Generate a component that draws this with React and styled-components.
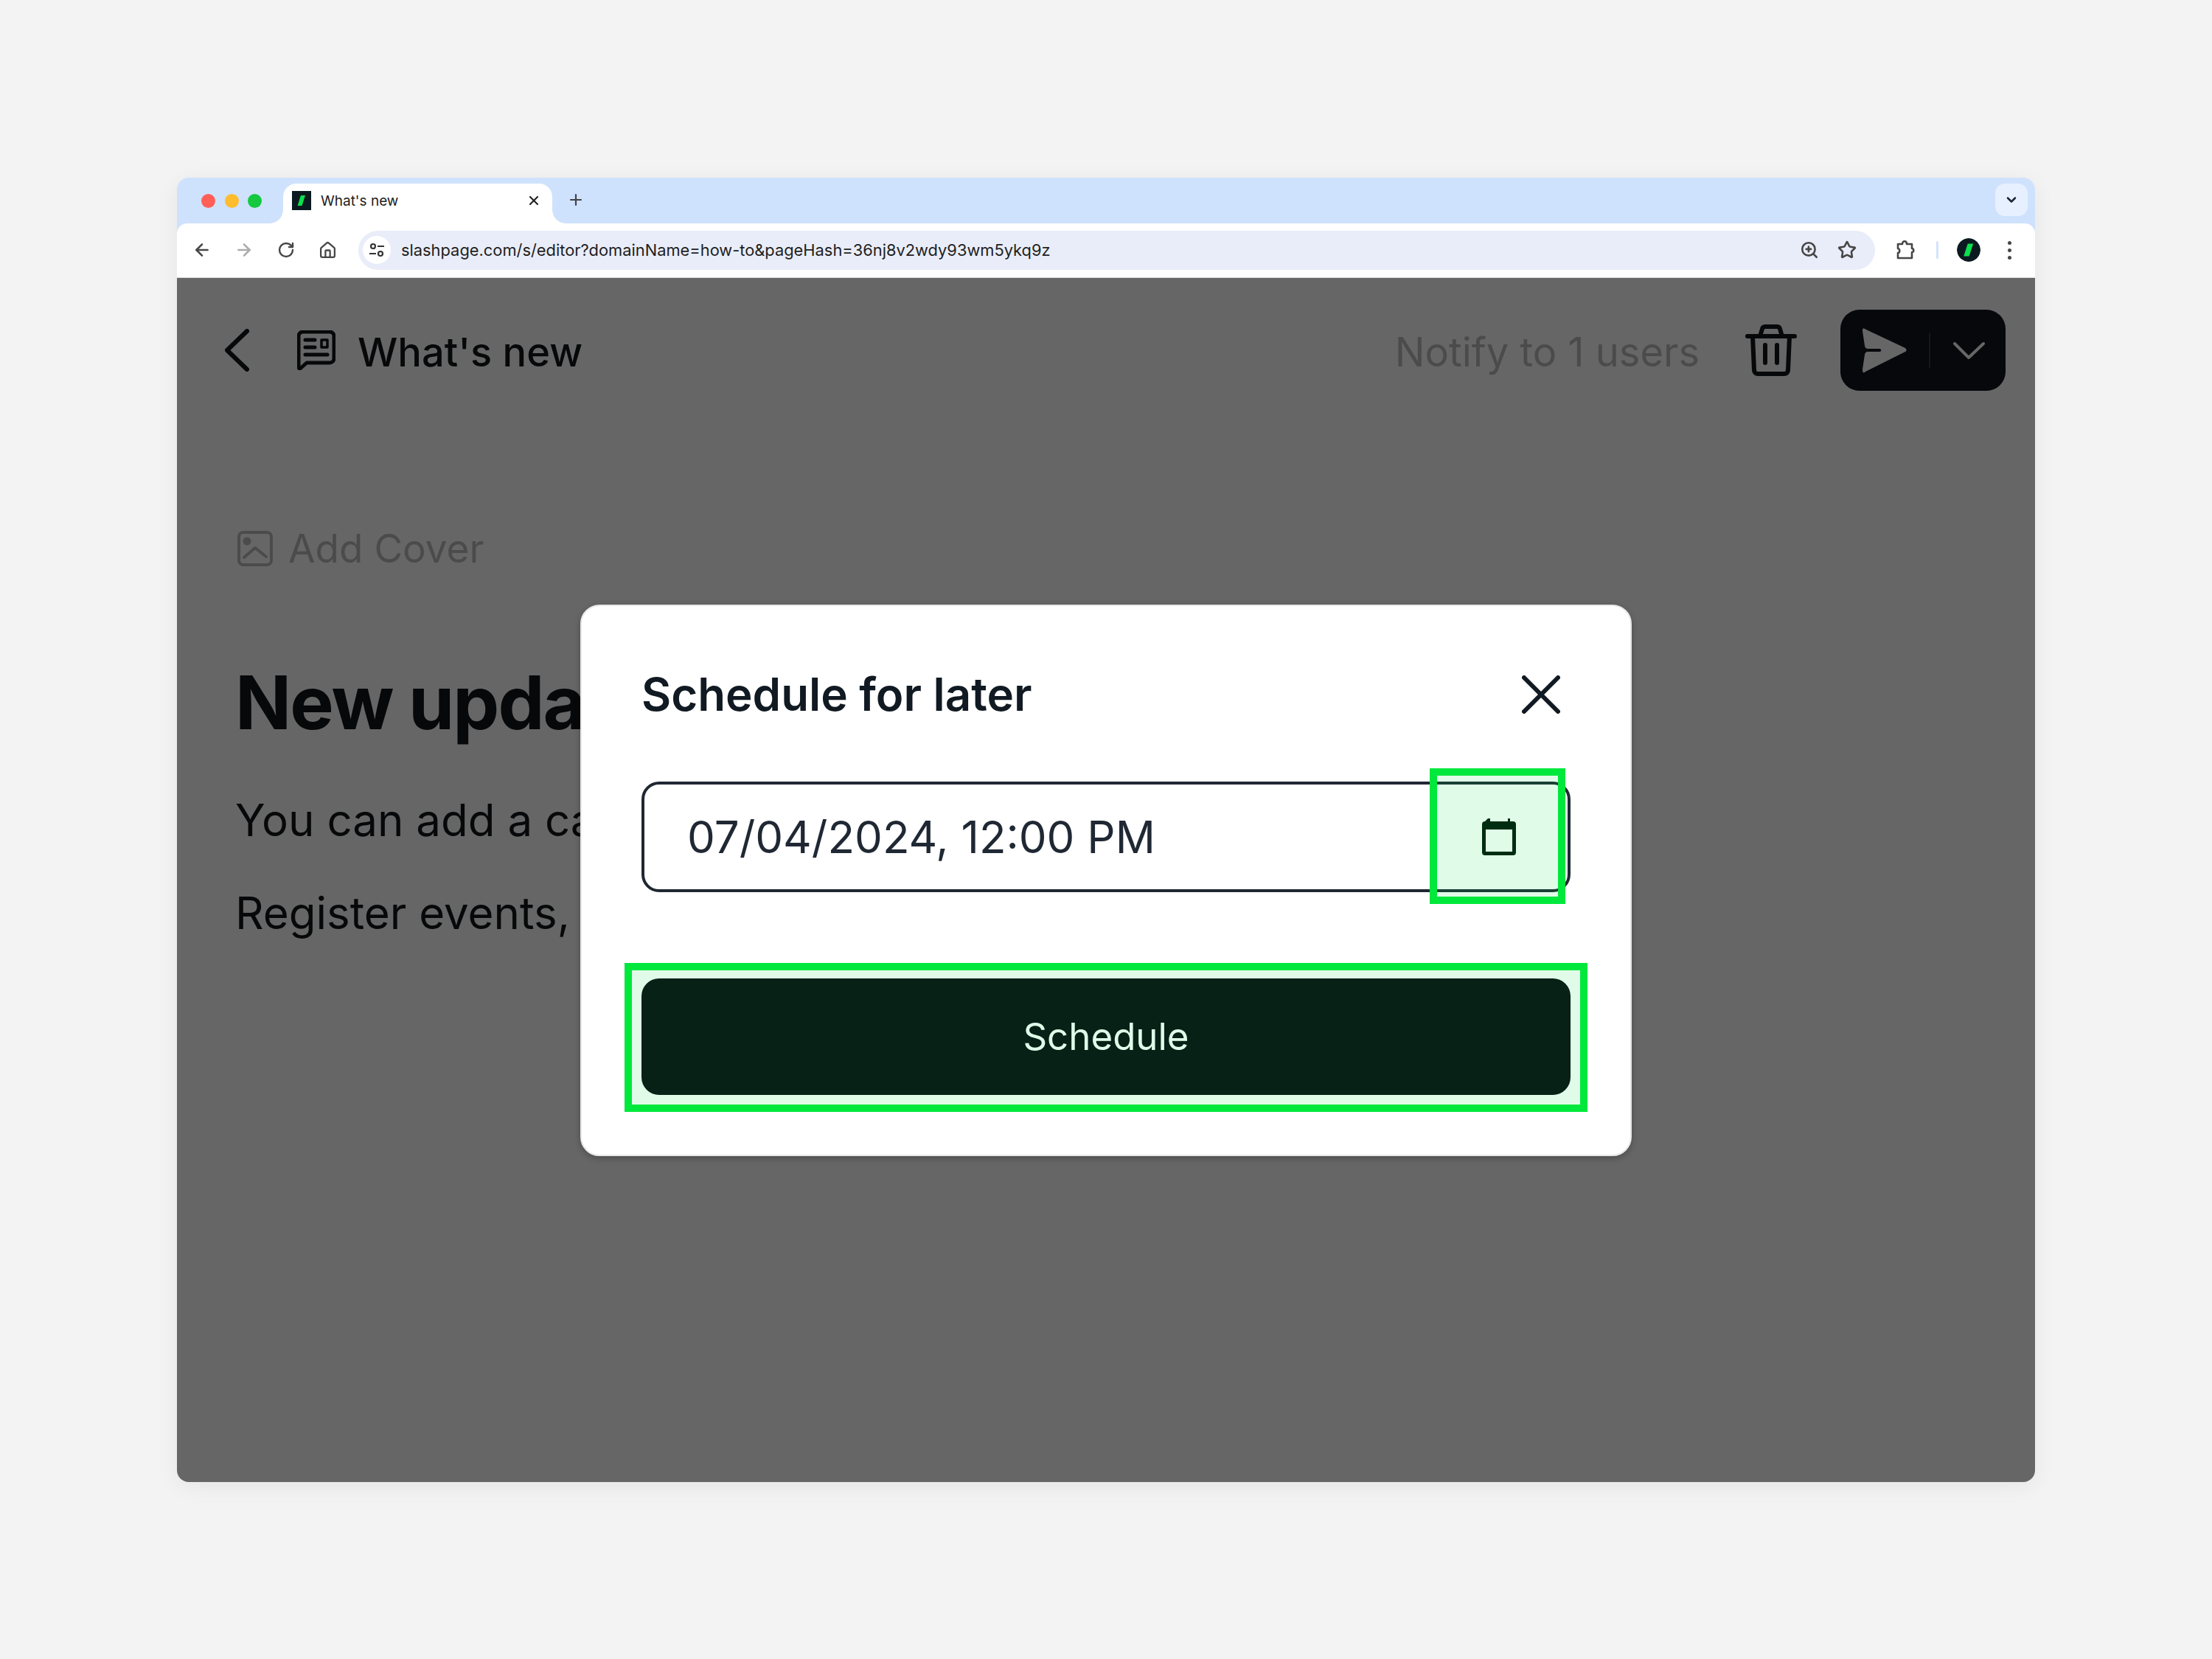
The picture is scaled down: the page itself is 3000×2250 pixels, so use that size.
import React from "react"
import styled, { createGlobalStyle } from "styled-components"
import { ArrowLeft, ArrowRight, RotateCw, House, ZoomIn, Star, ChevronDown, Plus, X } from "lucide-react"

const GlobalStyle = createGlobalStyle`
  html, body { margin: 0; padding: 0; background: #f3f3f3; }
  * { box-sizing: border-box; }
  body { font-family: Inter, "Noto Sans", sans-serif; }
`

const Stage = styled.div`
  width: 3000px;
  height: 2250px;
  padding: 241px 240px 0;
  background: #f3f3f3;
`

const BrowserWindow = styled.div`
  height: 1769px;
  display: flex;
  flex-direction: column;
  border-radius: 16px;
  overflow: hidden;
  background: #cfe2fd;
  box-shadow: 0 6px 30px rgba(0, 0, 0, 0.06);
`

const TabStrip = styled.div`
  height: 62px;
  flex: none;
  display: flex;
  align-items: flex-end;
  padding: 0 10px 0 33px;
`

const Lights = styled.div`
  display: flex;
  gap: 12.5px;
  margin: 0 29px 21px 0;
`

const Light = styled.span`
  width: 19px;
  height: 19px;
  border-radius: 50%;
  background: ${(p) => p.$color};
`

const Tab = styled.div`
  position: relative;
  width: 365px;
  height: 54px;
  display: flex;
  align-items: center;
  padding: 0 15px 8px 12px;
  background: #fff;
  border-radius: 18px 18px 0 0;
  &::before,
  &::after {
    content: "";
    position: absolute;
    bottom: 0;
    width: 18px;
    height: 18px;
  }
  &::before {
    left: -18px;
    background: radial-gradient(circle at 0 0, #cfe2fd 17.5px, #fff 18px);
  }
  &::after {
    right: -18px;
    background: radial-gradient(circle at 100% 0, #cfe2fd 17.5px, #fff 18px);
  }
`

const TabTitle = styled.span`
  margin-left: 13px;
  font-size: 19px;
  color: #222;
  flex: 1;
`

const NewTab = styled.div`
  width: 36px;
  height: 36px;
  margin: 0 0 14px 14px;
  display: flex;
  align-items: center;
  justify-content: center;
  color: #444;
`

const TabSearch = styled.div`
  width: 44px;
  height: 44px;
  margin: 0 0 10px auto;
  display: flex;
  align-items: center;
  justify-content: center;
  border-radius: 13px;
  background: #e7f0fe;
  color: #1c2530;
`

const Toolbar = styled.div`
  height: 74px;
  flex: none;
  display: flex;
  align-items: center;
  padding: 0 0 1px 5px;
  background: #fff;
  border-radius: 14px 14px 0 0;
  border-bottom: 1px solid #dcdcdc;
`

const NavButton = styled.div`
  width: 57px;
  height: 40px;
  display: flex;
  align-items: center;
  justify-content: center;
  color: ${(p) => (p.$disabled ? "#ababab" : "#474747")};
`

const Omnibox = styled.div`
  width: 2057px;
  height: 53px;
  margin-left: 13px;
  display: flex;
  align-items: center;
  padding: 0 20px 0 6px;
  border-radius: 27px;
  background: #e9edf9;
`

const SiteInfo = styled.div`
  width: 38px;
  height: 38px;
  flex: none;
  display: flex;
  align-items: center;
  justify-content: center;
  border-radius: 50%;
  background: #fff;
`

const Url = styled.span`
  margin-left: 14px;
  flex: 1;
  font-size: 21.85px;
  color: #1f1f1f;
  white-space: nowrap;
`

const OmniIcon = styled.div`
  width: 36px;
  height: 36px;
  display: flex;
  align-items: center;
  justify-content: center;
  color: #474747;
  margin-left: ${(p) => p.$gap || 0}px;
`

const ToolDivider = styled.div`
  width: 3px;
  height: 24px;
  margin-left: 23px;
  border-radius: 2px;
  background: #d3e3fd;
`

const Avatar = styled.div`
  width: 32px;
  height: 32px;
  margin-left: 25px;
  border-radius: 50%;
  overflow: hidden;
`

const Dots = styled.div`
  margin-left: 37px;
  display: flex;
  flex-direction: column;
  gap: 5px;
  & > span {
    width: 5px;
    height: 5px;
    border-radius: 50%;
    background: #474747;
  }
`

const Content = styled.div`
  position: relative;
  flex: 1;
  background: #fff;
  overflow: hidden;
`

const EditorBar = styled.div`
  height: 110px;
  margin-top: 43px;
  display: flex;
  align-items: center;
  padding: 0 40px 0 65px;
`

const BackIcon = styled.svg`
  width: 33px;
  height: 58px;
  margin-right: 65px;
`

const DocIcon = styled.svg`
  width: 52px;
  height: 54px;
  margin-right: 30px;
`

const DocTitle = styled.h1`
  margin: 4px 0 0;
  flex: 1;
  font-size: 54.2px;
  line-height: 70px;
  font-weight: 500;
  color: #111418;
`

const NotifyLabel = styled.span`
  margin-top: 4px;
  font-size: 54.2px;
  font-weight: 400;
  color: #bcbcbc;
`

const TrashIcon = styled.svg`
  width: 70px;
  height: 70px;
  margin-left: 62px;
`

const SendButton = styled.div`
  width: 224px;
  height: 110px;
  margin-left: 59px;
  display: flex;
  align-items: center;
  padding-left: 30px;
  border-radius: 26px;
  background: #12141c;
`

const SendDivider = styled.span`
  width: 2px;
  height: 47px;
  margin: 0 31px 0 30px;
  background: #3a3a3a;
`

const Editor = styled.div`
  padding: 188px 82px 0;
`

const AddCover = styled.div`
  display: flex;
  align-items: center;
  gap: 21px;
  height: 52px;
  font-size: 53px;
  color: #bcbcbc;
`

const Headline = styled.h2`
  margin: 123px 0 0 -3px;
  font-size: 100px;
  line-height: 120px;
  font-weight: 700;
  letter-spacing: -2px;
  color: #111418;
`

const Paragraph = styled.p`
  margin: ${(p) => p.$top}px 0 0 -3px;
  font-size: 60px;
  line-height: 80px;
  color: #111418;
`

const Dimmer = styled.div`
  position: absolute;
  inset: 0;
  display: flex;
  align-items: center;
  justify-content: center;
  background: rgba(0, 0, 0, 0.6);
`

const Modal = styled.div`
  width: 1426px;
  padding: 79px 81px 81px;
  background: #fff;
  border-radius: 26px;
  border: 2px solid #e8e8e8;
  box-shadow: 0 3px 8px rgba(0, 0, 0, 0.25);
`

const ModalHeader = styled.div`
  height: 82px;
  display: flex;
  align-items: center;
  justify-content: space-between;
`

const ModalTitle = styled.h3`
  margin: 0;
  font-size: 61.8px;
  font-weight: 600;
  color: #111a22;
`

const CloseIcon = styled.div`
  width: 56px;
  height: 56px;
  margin-right: 12px;
  display: flex;
  align-items: center;
  justify-content: center;
  color: #111a22;
`

const DateField = styled.div`
  position: relative;
  height: 150px;
  margin-top: 77px;
  display: flex;
  align-items: center;
  justify-content: space-between;
  padding: 0 70px 0 58px;
  border: 4px solid #1f2833;
  border-radius: 24px;
`

const DateValue = styled.span`
  font-size: 60px;
  color: #1f2833;
`

const CalendarIcon = styled.svg`
  width: 46px;
  height: 50px;
`

const SubmitButton = styled.div`
  position: relative;
  height: 158px;
  margin-top: 117px;
  display: flex;
  align-items: center;
  justify-content: center;
  border-radius: 24px;
  background: #090610;
  color: #fff;
  font-size: 51px;
  font-weight: 400;
`

const Highlight = styled.div`
  position: absolute;
  border: 10px solid #00e83c;
  background: rgba(0, 230, 70, 0.12);
  pointer-events: none;
`

const CalendarHighlight = styled(Highlight)`
  top: -22px;
  right: 3px;
  width: 184px;
  height: 184px;
`

const ButtonHighlight = styled(Highlight)`
  inset: -21px -23px -23px -23px;
`

function SlashMark({ size, round }) {
  return (
    <svg width={size} height={size} viewBox="0 0 26 26">
      {round ? <circle cx="13" cy="13" r="13" fill="#0b1a20" /> : <rect width="26" height="26" fill="#0b1a20" />}
      <path d="M12 6h6l-4.5 14h-6z" fill="#0be04f" />
    </svg>
  )
}

export default function App() {
  return (
    <Stage>
      <GlobalStyle />
      <BrowserWindow>
        <TabStrip>
          <Lights>
            <Light $color="#ff5f57" />
            <Light $color="#febc2e" />
            <Light $color="#14c93f" />
          </Lights>
          <Tab>
            <SlashMark size={26} />
            <TabTitle>What's new</TabTitle>
            <X size={20} strokeWidth={2.6} color="#222" />
          </Tab>
          <NewTab>
            <Plus size={24} strokeWidth={2.2} />
          </NewTab>
          <TabSearch>
            <ChevronDown size={20} strokeWidth={3} />
          </TabSearch>
        </TabStrip>
        <Toolbar>
          <NavButton><ArrowLeft size={26} strokeWidth={2.4} /></NavButton>
          <NavButton $disabled><ArrowRight size={26} strokeWidth={2.4} /></NavButton>
          <NavButton><RotateCw size={24} strokeWidth={2.4} /></NavButton>
          <NavButton><House size={25} strokeWidth={2.2} /></NavButton>
          <Omnibox>
            <SiteInfo>
              <svg width="24" height="24" viewBox="0 0 24 24" fill="none" stroke="#333" strokeWidth="2.2">
                <circle cx="7" cy="7" r="3" />
                <path d="M13 7h9M2 17h9" />
                <circle cx="17" cy="17" r="3" />
              </svg>
            </SiteInfo>
            <Url>slashpage.com/s/editor?domainName=how-to&pageHash=36nj8v2wdy93wm5ykq9z</Url>
            <OmniIcon><ZoomIn size={26} strokeWidth={2.4} /></OmniIcon>
            <OmniIcon $gap={15}><Star size={26} strokeWidth={2.4} /></OmniIcon>
          </Omnibox>
          <OmniIcon $gap={24}>
            <svg width="28" height="28" viewBox="0 0 28 28" fill="none" stroke="#474747" strokeWidth="2.6" strokeLinejoin="round">
              <path d="M3 6h6c0-5 6-5 6 0h7v6c3 0 3 5 0 5v8H3v-7c3 0 3-6 0-6z" />
            </svg>
          </OmniIcon>
          <ToolDivider />
          <Avatar><SlashMark size={32} round /></Avatar>
          <Dots><span /><span /><span /></Dots>
        </Toolbar>
        <Content>
          <EditorBar>
            <BackIcon viewBox="0 0 33 58" fill="none" stroke="#111418" strokeWidth="6" strokeLinecap="round" strokeLinejoin="round">
              <path d="M30 3L3 29l27 26" />
            </BackIcon>
            <DocIcon viewBox="0 0 52 54" fill="none" stroke="#111418" strokeWidth="5" strokeLinecap="round" strokeLinejoin="round">
              <path d="M8 2h36a6 6 0 0 1 6 6v30a6 6 0 0 1-6 6H13l-9 8a2 2 0 0 1-2-2V8a6 6 0 0 1 6-6z" />
              <path d="M11 13h13M11 23h13M11 33h30" />
              <rect x="33" y="13" width="8" height="10" strokeWidth="3.5" />
            </DocIcon>
            <DocTitle>What's new</DocTitle>
            <NotifyLabel>Notify to 1 users</NotifyLabel>
            <TrashIcon viewBox="0 0 70 70" fill="none" stroke="#111418" strokeWidth="6" strokeLinecap="round" strokeLinejoin="round">
              <path d="M3 16h64M20 16l3-10a4 4 0 0 1 4-3h16a4 4 0 0 1 4 3l3 10" />
              <path d="M10 16l2 46a5 5 0 0 0 5 5h36a5 5 0 0 0 5-5l2-46" />
              <path d="M27 28v24M43 28v24" />
            </TrashIcon>
            <SendButton>
              <svg width="60" height="62" viewBox="0 0 60 62">
                <path d="M3 2c-2-2-3 0-3 3l3 20c0 2 2 4 4 4h16c3 0 3 4 0 4H7c-2 0-4 2-4 4L0 57c0 4 1 6 4 3l54-27c2-1 2-3 0-5z" fill="#fff" />
              </svg>
              <SendDivider />
              <svg width="43" height="24" viewBox="0 0 43 24" fill="none" stroke="#fff" strokeWidth="4" strokeLinecap="round" strokeLinejoin="round">
                <path d="M2 3l19 19L41 3" />
              </svg>
            </SendButton>
          </EditorBar>
          <Editor>
            <AddCover>
              <svg width="48" height="48" viewBox="0 0 48 48" fill="none" stroke="#bcbcbc" strokeWidth="4" strokeLinecap="round" strokeLinejoin="round">
                <rect x="2" y="2" width="44" height="44" rx="6" />
                <circle cx="13" cy="14" r="3.5" fill="#bcbcbc" />
                <path d="M9 36l15-13 15 12" />
              </svg>
              Add Cover
            </AddCover>
            <Headline>New update</Headline>
            <Paragraph $top={59}>You can add a card</Paragraph>
            <Paragraph $top={46}>Register events,</Paragraph>
          </Editor>
          <Dimmer>
            <Modal>
              <ModalHeader>
                <ModalTitle>Schedule for later</ModalTitle>
                <CloseIcon>
                  <svg width="52" height="52" viewBox="0 0 52 52" fill="none" stroke="currentColor" strokeWidth="6" strokeLinecap="round">
                    <path d="M3 3l46 46M49 3L3 49" />
                  </svg>
                </CloseIcon>
              </ModalHeader>
              <DateField>
                <DateValue>07/04/2024, 12:00 PM</DateValue>
                <CalendarIcon viewBox="0 0 46 50">
                  <path
                    fill="#00140a"
                    fillRule="evenodd"
                    d="M8 0h3v4h24V0h3v4h4a4 4 0 0 1 4 4v38a4 4 0 0 1-4 4H4a4 4 0 0 1-4-4V8a4 4 0 0 1 4-4zM5 15v30h36V15z"
                  />
                </CalendarIcon>
                <CalendarHighlight />
              </DateField>
              <SubmitButton>
                Schedule
                <ButtonHighlight />
              </SubmitButton>
            </Modal>
          </Dimmer>
        </Content>
      </BrowserWindow>
    </Stage>
  )
}
